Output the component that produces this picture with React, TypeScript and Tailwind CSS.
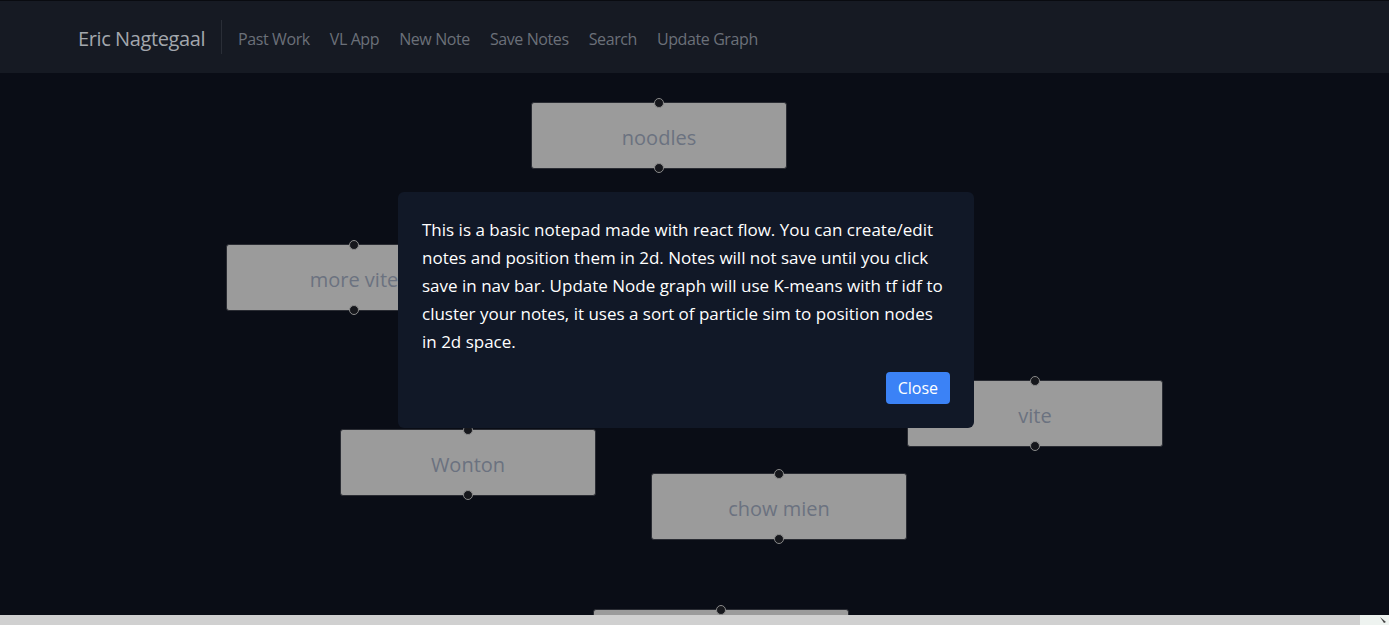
import React from "react"

type NoteNode = { id: string; label: string; x: number; y: number }

const nodes: NoteNode[] = [
  { id: "1", label: "noodles", x: 531, y: 29 },
  { id: "2", label: "more vite", x: 226, y: 171 },
  { id: "3", label: "vite", x: 907, y: 307 },
  { id: "4", label: "Wonton", x: 340, y: 356 },
  { id: "5", label: "chow mien", x: 651, y: 400 },
  { id: "6", label: "", x: 593, y: 536 },
]

const links = ["Past Work", "VL App", "New Note", "Save Notes", "Search", "Update Graph"]

function Handle({ side }: { side: "top" | "bottom" }) {
  return (
    <div
      className={
        "absolute left-1/2 -translate-x-1/2 h-[10px] w-[10px] rounded-full border-[1.5px] border-[#8a8a8a] bg-[#16171c] " +
        (side === "top" ? "-top-[5px]" : "-bottom-[5px]")
      }
    />
  )
}

function Note({ node }: { node: NoteNode }) {
  return (
    <div
      className="absolute flex h-[67px] w-[256px] items-center justify-center rounded-[3px] border border-[#2a2c33] bg-[#9b9b9b] pt-[4px]"
      style={{ left: node.x, top: node.y }}
    >
      <Handle side="top" />
      <span className="text-[20px] text-[#6b7280]">{node.label}</span>
      <Handle side="bottom" />
    </div>
  )
}

export default function App() {
  return (
    <div className="flex h-[625px] w-full flex-col overflow-hidden bg-[#0a0d16] font-['Open_Sans',sans-serif]">
      <nav className="flex h-[73px] shrink-0 items-center border-t border-[#090b10] bg-[#161a23] pl-[78px]">
        <span className="pr-[16px] pt-[3px] text-[20px] tracking-[-0.4px] text-[#a3a7ad]">Eric Nagtegaal</span>
        <div className="h-[34px] w-px bg-[#2a2e37]" />
        <ul className="flex gap-5 pl-4 pt-[3px]">
          {links.map((l) => (
            <li key={l} className="text-[16px] tracking-[-0.4px] text-[#6b7079]">
              {l}
            </li>
          ))}
        </ul>
      </nav>

      <div className="relative flex-1 overflow-hidden">
        {nodes.map((n) => (
          <Note key={n.id} node={n} />
        ))}

        <div className="absolute left-[398px] top-[119px] flex w-[576px] flex-col rounded-md bg-[#111827] px-6 pb-6 pt-6">
          <p className="text-[17px] leading-[28px] text-white">
            This is a basic notepad made with react flow. You can create/edit notes and position them in 2d. Notes
            will not save until you click save in nav bar. Update Node graph will use K-means with tf idf to cluster
            your notes, it uses a sort of particle sim to position nodes in 2d space.
          </p>
          <div className="mt-4 flex justify-end">
            <button className="h-8 rounded bg-[#3b82f6] px-3 text-[16px] text-white">Close</button>
          </div>
        </div>
      </div>

      <div className="flex h-[10px] shrink-0 bg-[#d0d0d0]">
        <div className="flex-1" />
        <div className="flex w-[29px] items-center justify-end bg-[#eef3f0] pr-[3px]">
          <svg width="6" height="6" viewBox="0 0 6 6">
            <path d="M0 0 L6 5 L4 6 Z" fill="#444" />
          </svg>
        </div>
      </div>
    </div>
  )
}
